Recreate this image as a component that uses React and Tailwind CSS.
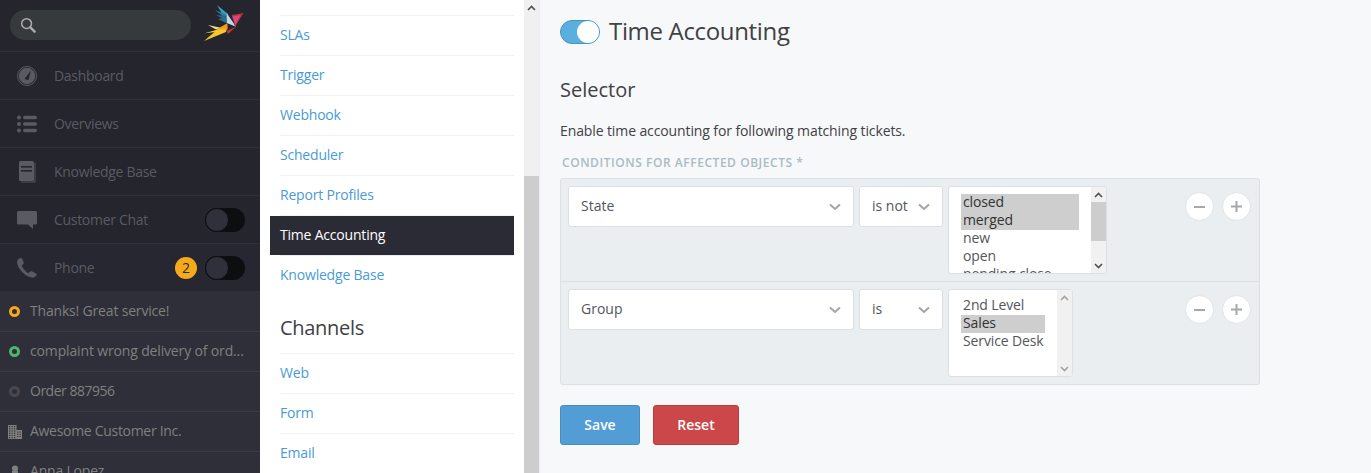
import React from "react";

function Bird() {
  return (
    <svg width="40" height="37" viewBox="0 0 40 37" className="block">
      <polygon points="13,0 24,9 20,12" fill="#3b9dc2" />
      <polygon points="11,5 23,10 21,13" fill="#2d7f9e" />
      <polygon points="12,10 23,11 21,15" fill="#256c88" />
      <polygon points="14,14 23,12 22,18" fill="#2f6d85" />
      <polygon points="22.7,8 32,21.7 22.7,18" fill="#b6dcef" />
      <polygon points="27.7,10 39.5,8 31,21.7" fill="#b8313c" />
      <polygon points="28.5,11.5 36.5,10 31.5,20" fill="#dd4578" />
      <polygon points="0,36 14,24 23,23 22,27" fill="#f7c62f" />
      <polygon points="0.7,28.3 18,23.3 12,27" fill="#f7c62f" />
      <polygon points="4,20 18,23 12,24.5" fill="#e9dc8f" />
      <polygon points="12.7,24.3 23.3,18.3 23.7,24.3" fill="#f39c1f" />
      <polygon points="22.7,25.7 32,21.7 24,29" fill="#c4372b" />
    </svg>
  );
}

function Toggle() {
  return (
    <div className="w-[40px] h-[24px] rounded-full bg-[#0d0e10] relative shrink-0">
      <div className="absolute left-0 top-0 w-[24px] h-[24px] rounded-full bg-[#2f3039] border border-[#0d0e10]" />
    </div>
  );
}

function NavRow({ icon, label, children, dark }) {
  return (
    <div className={`h-[48px] flex items-center border-b border-[#2e2f38] pl-[17px] pr-[15px] shrink-0 ${dark ? "bg-[#262730]" : ""}`}>
      <div className="w-[20px] h-[24px] flex items-center justify-center text-[#5a5b62]">{icon}</div>
      <span className="ml-[17px] text-[14px] tracking-[-0.3px] text-[#5a5b62] flex-1">{label}</span>
      {children}
    </div>
  );
}

function Ring({ color }) {
  return (
    <span className="w-[11px] h-[11px] rounded-full border-[3px] block" style={{ borderColor: color }} />
  );
}

function TabRow({ icon, label, track }) {
  return (
    <div className="h-[40px] flex items-center border-b border-[#3b3c45] shrink-0">
      <div className="w-[30px] flex items-center justify-start pl-[9px]">{icon}</div>
      <span className={`text-[14px] text-[#808080] whitespace-nowrap -mt-[2px] ${track}`}>{label}</span>
    </div>
  );
}

function MenuItem({ label, active, last }) {
  return active ? (
    <div className="h-[40px]">
      <div className="h-[39px] bg-[#2a2b34] text-white font-medium text-[14px] tracking-[-0.2px] flex items-center pb-[2px] pl-[10px]">{label}</div>
      <div className="h-[1px] ml-[10px] bg-[#eceef0]" />
    </div>
  ) : (
    <div className={`h-[40px] ml-[10px] flex items-center text-[14px] tracking-[-0.2px] text-[#4a9ad6] ${last ? "pb-[3px]" : "pb-[2px] border-b border-[#f0f1f2]"}`}>
      <span>{label}</span>
    </div>
  );
}

function Chevron() {
  return (
    <svg width="12" height="8" viewBox="0 0 12 8" className="block">
      <path d="M1 1.5 L6 6 L11 1.5" fill="none" stroke="#a3a5a7" strokeWidth="2" />
    </svg>
  );
}

function SelectBox({ label, width }) {
  return (
    <div className={`h-[41px] bg-white border border-[#dae0e4] rounded-[3px] flex items-center justify-between pl-[12px] pr-[12px] text-[14px] text-[#54565a] shrink-0 ${width}`}>
      <span className="-mt-[2px]">{label}</span>
      <Chevron />
    </div>
  );
}

function Arrow({ up, dark }) {
  return (
    <svg width="9" height="6" viewBox="0 0 9 6" className="block">
      <path d={up ? "M1 5 L4.5 1.5 L8 5" : "M1 1 L4.5 4.5 L8 1"} fill="none" stroke={dark ? "#505050" : "#a3a3a3"} strokeWidth="1.6" />
    </svg>
  );
}

function ListBox({ items, selected, thumb, width, textWidth }) {
  return (
    <div className={`h-[88px] bg-white border border-[#dae0e4] rounded-[3px] flex overflow-hidden shrink-0 ${width}`}>
      <div className="flex-1 pt-[7px] pl-[12px] overflow-hidden">
        {items.map((t) => (
          <div key={t} className={`h-[18px] leading-[16px] pl-[2px] text-[14px] tracking-[-0.12px] whitespace-nowrap ${textWidth} ${selected.includes(t) ? "bg-[#cecece] text-[#333]" : "text-[#54565a]"}`}>{t}</div>
        ))}
      </div>
      <div className="w-[15px] bg-[#f1f1f1] flex flex-col items-center shrink-0">
        <div className="h-[15px] flex items-center justify-center shrink-0"><Arrow up dark={thumb} /></div>
        <div className="flex-1">
          {thumb && <div className="w-[15px] h-[39px] bg-[#cdcdcd]" />}
        </div>
        <div className="h-[15px] flex items-center justify-center shrink-0"><Arrow dark={thumb} /></div>
      </div>
    </div>
  );
}

function RoundBtn({ children }) {
  return (
    <div className="w-[29px] h-[29px] rounded-full bg-white border border-[#dfe4e7] flex items-center justify-center">
      {children}
    </div>
  );
}

function Minus() {
  return <div className="w-[11px] h-[2px] bg-[#a5a8ab]" />;
}
function Plus() {
  return (
    <svg width="11" height="11" viewBox="0 0 11 11" className="block">
      <path d="M5.5 0 V11 M0 5.5 H11" stroke="#a5a8ab" strokeWidth="2" />
    </svg>
  );
}

function ConditionRow({ field, op, list, selected, thumb, listW, textW, border }) {
  return (
    <div className={`h-[103px] flex pt-[7px] pl-[7px] pr-[8px] ${border ? "border-b border-[#dae0e4]" : ""}`}>
      <SelectBox label={field} width="w-[286px]" />
      <div className="w-[5px] shrink-0" />
      <SelectBox label={op} width="w-[84px]" />
      <div className="w-[5px] shrink-0" />
      <ListBox items={list} selected={selected} thumb={thumb} width={listW} textWidth={textW} />
      <div className="flex-1" />
      <div className="flex gap-[8px] pt-[6px]">
        <RoundBtn><Minus /></RoundBtn>
        <RoundBtn><Plus /></RoundBtn>
      </div>
    </div>
  );
}

function Building() {
  const windows = [];
  for (let r = 0; r < 6; r++) {
    for (let c = 0; c < 3; c++) {
      windows.push(<rect key={`a${r}${c}`} x={1 + c * 2.5} y={1 + r * 2.2} width="1.2" height="1.2" fill="#2e2f38" />);
    }
  }
  for (let r = 0; r < 3; r++) {
    for (let c = 0; c < 2; c++) {
      windows.push(<rect key={`b${r}${c}`} x={9.3 + c * 2.3} y={6.5 + r * 2.2} width="1.1" height="1.2" fill="#2e2f38" />);
    }
  }
  return (
    <svg width="14" height="14" viewBox="0 0 14 14" className="-ml-[1px] block">
      <path d="M0 0 H8.5 V5 H14 V14 H0 Z" fill="#808080" />
      {windows}
    </svg>
  );
}

function Items() {
  const a = ["SLAs", "Trigger", "Webhook", "Scheduler", "Report Profiles"];
  const b = ["Web", "Form", "Email"];
  return (
    <>
      {a.map((l) => <MenuItem key={l} label={l} />)}
      <MenuItem label="Time Accounting" active />
      <MenuItem label="Knowledge Base" last />
      <div className="h-[39px] mt-[19px] ml-[10px] text-[20px] leading-[26px] tracking-[-0.3px] text-[#3f4145] border-b border-[#f0f1f2]">Channels</div>
      {b.map((l) => <MenuItem key={l} label={l} />)}
    </>
  );
}

export default function App() {
  return (
    <div className="w-[1371px] h-[473px] overflow-hidden flex bg-[#f7f8fa]" style={{ fontFamily: '"Open Sans", "Noto Sans", sans-serif' }}>
      {/* Sidebar */}
      <div className="w-[260px] shrink-0 bg-[#24252d] flex flex-col overflow-hidden">
        <div className="h-[52px] border-b border-[#2e2f38] flex items-center pl-[10px] relative shrink-0">
          <div className="w-[181px] h-[30px] rounded-full bg-[#363a3c] flex items-center pl-[10px] -mt-[1px]">
            <svg width="16" height="16" viewBox="0 0 17 17" className="block">
              <circle cx="7" cy="7" r="5.2" fill="none" stroke="#a9abac" strokeWidth="1.6" />
              <path d="M11 11 L15.5 15.5" stroke="#a9abac" strokeWidth="2.6" strokeLinecap="round" />
            </svg>
          </div>
          <div className="absolute left-[204px] top-[5px]"><Bird /></div>
        </div>
        <NavRow label="Dashboard" icon={
          <svg width="20" height="20" viewBox="0 0 20 20" className="block"><circle cx="10" cy="10" r="9.5" fill="none" stroke="#5a5b62" strokeWidth="1"/><circle cx="10" cy="10" r="8.2" fill="#5a5b62"/><path d="M7.5 13 L14 4.5 L11.5 14 Z" fill="#24252d"/></svg>
        } />
        <NavRow label="Overviews" icon={
          <svg width="20" height="18" viewBox="0 0 20 18" className="block"><circle cx="2" cy="2.5" r="2" fill="#5a5b62"/><circle cx="2" cy="9" r="2" fill="#5a5b62"/><circle cx="2" cy="15.5" r="2" fill="#5a5b62"/><rect x="6" y="0.8" width="14" height="3.4" rx="1.7" fill="#5a5b62"/><rect x="6" y="7.3" width="14" height="3.4" rx="1.7" fill="#5a5b62"/><rect x="6" y="13.8" width="14" height="3.4" rx="1.7" fill="#5a5b62"/></svg>
        } />
        <NavRow label="Knowledge Base" icon={
          <svg width="18" height="22" viewBox="0 0 18 22" className="block"><rect x="1" y="0" width="15" height="20" rx="1.5" fill="#5a5b62"/><path d="M17 2 V21 H3" fill="none" stroke="#5a5b62" strokeWidth="0.9"/><rect x="3" y="5" width="11" height="1.6" fill="#24252d"/><rect x="3" y="9" width="11" height="1.6" fill="#24252d"/></svg>
        } />
        <NavRow label="Customer Chat" icon={
          <svg width="20" height="18" viewBox="0 0 20 18" className="block"><path d="M1.5 0 H18.5 Q20 0 20 1.5 V12 Q20 13.5 18.5 13.5 H16 V18 L11 13.5 H1.5 Q0 13.5 0 12 V1.5 Q0 0 1.5 0 Z" fill="#5a5b62"/></svg>
        }><Toggle /></NavRow>
        <NavRow dark label="Phone" icon={
          <svg width="22" height="22" viewBox="0 0 22 22" className="-ml-[1px] block"><path d="M4.5 0.5 C3 1 1 2.5 1 5 C1.5 11 8 19 16 21 C18.5 21.5 20.5 20 21.5 18.5 C22 17.5 21.5 17 20.5 16.5 L16.5 14.5 C15.5 14 15 14.5 14.5 15 L13 16.5 C10 15 7 11.5 6 8.5 L7.5 7 C8 6.5 8.2 6 8 5 L6.2 1 C5.8 0.3 5.2 0.2 4.5 0.5 Z" fill="#5a5b62"/></svg>
        }>
          <div className="w-[22px] h-[22px] rounded-full bg-[#f6a91a] text-[#2a2b34] text-[14px] flex items-center justify-center mr-[8px]">2</div>
          <Toggle />
        </NavRow>
        <div className="bg-[#2e2f38] flex-1">
          <TabRow track="tracking-[-0.18px]" icon={<Ring color="#f6a91a" />} label="Thanks! Great service!" />
          <TabRow track="tracking-[-0.15px]" icon={<Ring color="#4fb56a" />} label="complaint wrong delivery of ord..." />
          <TabRow track="tracking-[-0.5px]" icon={<Ring color="#474850" />} label="Order 887956" />
          <TabRow track="tracking-[-0.3px]" icon={<Building />} label="Awesome Customer Inc." />
          <TabRow track="tracking-[-0.2px]" icon={
            <svg width="10" height="14" viewBox="0 0 10 14" className="ml-[1px] block" fill="#808080"><circle cx="5" cy="3.5" r="3"/><rect x="2" y="6" width="6" height="8"/></svg>
          } label="Anna Lopez" />
        </div>
      </div>

      {/* Middle */}
      <div className="w-[264px] shrink-0 bg-white px-[10px] overflow-hidden">
        <div className="h-[16px] border-b border-[#f0f1f2] ml-[10px]" />
        <Items />
      </div>

      {/* Scrollbar */}
      <div className="w-[16px] shrink-0 bg-[#f0f0f0] border-r border-[#eceef0] flex flex-col">
        <div className="h-[15px] flex items-center justify-center shrink-0"><Arrow up dark /></div>
        <div className="h-[161px] shrink-0" />
        <div className="flex-1 bg-[#cdcdcd]" />
      </div>

      {/* Content */}
      <div className="flex-1 pl-[20px] min-w-0">
        <div className="flex items-center pt-[19px]">
          <div className="w-[40px] h-[24px] rounded-full bg-[#5aaee0] border border-[#4a94c4] relative">
            <div className="absolute right-0 top-0 w-[22px] h-[22px] rounded-full bg-white" />
          </div>
          <h1 className="ml-[9px] text-[24px] leading-[26px] tracking-[-0.33px] text-[#3f4145] -mt-[1px]">Time Accounting</h1>
        </div>
        <h2 className="mt-[33px] text-[20px] leading-[26px] text-[#3f4145]">Selector</h2>
        <p className="mt-[18px] text-[14px] leading-[20px] tracking-[-0.11px] text-[#3f4145]">Enable time accounting for following matching tickets.</p>
        <div className="mt-[14px] ml-[2px] text-[12px] leading-[16px] font-semibold tracking-[0.55px] text-[#a9bcc4]">CONDITIONS FOR AFFECTED OBJECTS *</div>
        <div className="mt-[7px] w-[700px] h-[207px] bg-[#eaeef1] border border-[#dae0e4] rounded-[3px]">
          <ConditionRow border field="State" op="is not" list={["closed", "merged", "new", "open", "pending close"]} selected={["closed", "merged"]} thumb listW="w-[159px]" textW="w-[118px]" />
          <ConditionRow field="Group" op="is" list={["2nd Level", "Sales", "Service Desk"]} selected={["Sales"]} listW="w-[125px]" textW="w-[84px]" />
        </div>
        <div className="flex gap-[13px] mt-[20px]">
          <div className="w-[80px] h-[40px] rounded-[3px] bg-[#529dd6] border border-[#4a8dbb] text-white font-semibold text-[14px] flex items-center justify-center pb-[2px]">Save</div>
          <div className="w-[86px] h-[40px] rounded-[3px] bg-[#cc4749] border border-[#b83c3c] text-white font-semibold text-[14px] flex items-center justify-center pb-[2px]">Reset</div>
        </div>
      </div>
    </div>
  );
}
